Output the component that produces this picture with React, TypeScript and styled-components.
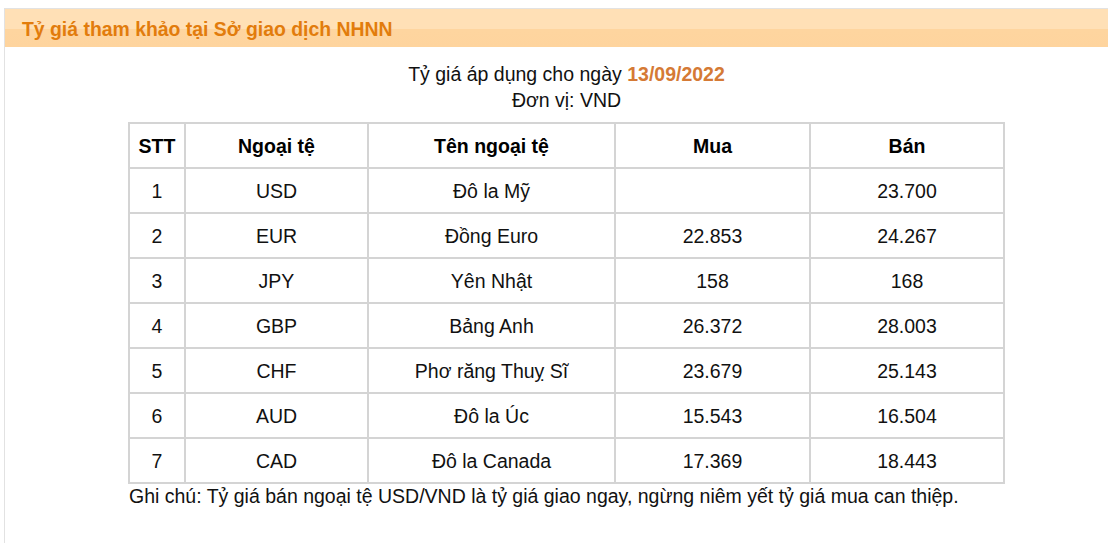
import styled, { createGlobalStyle } from "styled-components";

const GlobalStyle = createGlobalStyle`
  html, body {
    margin: 0;
    padding: 0;
    background: #fff;
    overflow: hidden;
  }
  body {
    padding: 8px 0 0 4px;
    font-family: "Liberation Sans", Arial, sans-serif;
    color: #111;
  }
`;

type Row = {
  stt: number;
  code: string;
  name: string;
  buy: string;
  sell: string;
};

const rows: Row[] = [
  { stt: 1, code: "USD", name: "Đô la Mỹ", buy: "", sell: "23.700" },
  { stt: 2, code: "EUR", name: "Đồng Euro", buy: "22.853", sell: "24.267" },
  { stt: 3, code: "JPY", name: "Yên Nhật", buy: "158", sell: "168" },
  { stt: 4, code: "GBP", name: "Bảng Anh", buy: "26.372", sell: "28.003" },
  { stt: 5, code: "CHF", name: "Phơ răng Thuỵ Sĩ", buy: "23.679", sell: "25.143" },
  { stt: 6, code: "AUD", name: "Đô la Úc", buy: "15.543", sell: "16.504" },
  { stt: 7, code: "CAD", name: "Đô la Canada", buy: "17.369", sell: "18.443" },
];

const colWidths = [56, 183, 247, 195, 194];

const Panel = styled.section`
  width: 1124px;
  min-height: 540px;
  border-top: 1px solid #e2e2e2;
  border-left: 1px solid #e2e2e2;
  box-sizing: border-box;
`;

const PanelHead = styled.div`
  height: 38px;
  display: flex;
  align-items: center;
  padding-left: 17px;
  background: linear-gradient(to bottom, #ffe0b6 0%, #ffe0b6 52%, #fed59f 53%, #fed49e 100%);
`;

const PanelTitle = styled.h2`
  margin: 0;
  font-size: 19.4px;
  font-weight: bold;
  color: #e27c0c;
  padding-top: 2px;
`;

const PanelBody = styled.div`
  display: flex;
  flex-direction: column;
  align-items: center;
  padding-top: 14px;
`;

const Caption = styled.div`
  font-size: 19.5px;
  line-height: 26px;
  text-align: center;
  color: #111;
`;

const DateText = styled.span`
  color: #d57a35;
  font-weight: bold;
`;

const TableWrap = styled.div`
  margin-top: 9px;
  display: flex;
  flex-direction: column;
`;

const Table = styled.table`
  border: 1px solid #d4d4d4;
  border-spacing: 0;
  border-collapse: separate;
  table-layout: fixed;
  width: 875px;
`;

const Th = styled.th`
  border: 1px solid #d4d4d4;
  height: 43px;
  padding: 0;
  line-height: 22px;
  font-size: 19.5px;
  font-weight: bold;
  text-align: center;
  color: #000;
`;

const Td = styled.td`
  border: 1px solid #d4d4d4;
  height: 43px;
  padding: 0;
  line-height: 22px;
  font-size: 19.5px;
  text-align: center;
  color: #111;
`;

const Note = styled.p`
  margin: 0;
  padding-left: 1px;
  font-size: 19.5px;
  line-height: 24px;
  color: #111;
`;

export default function App() {
  return (
    <>
      <GlobalStyle />
      <Panel>
        <PanelHead>
          <PanelTitle>Tỷ giá tham khảo tại Sở giao dịch NHNN</PanelTitle>
        </PanelHead>
        <PanelBody>
          <Caption>
            Tỷ giá áp dụng cho ngày <DateText>13/09/2022</DateText>
          </Caption>
          <Caption>Đơn vị: VND</Caption>
          <TableWrap>
            <Table>
              <colgroup>
                {colWidths.map((w, i) => (
                  <col key={i} style={{ width: w }} />
                ))}
              </colgroup>
              <thead>
                <tr>
                  <Th>STT</Th>
                  <Th>Ngoại tệ</Th>
                  <Th>Tên ngoại tệ</Th>
                  <Th>Mua</Th>
                  <Th>Bán</Th>
                </tr>
              </thead>
              <tbody>
                {rows.map((r) => (
                  <tr key={r.stt}>
                    <Td>{r.stt}</Td>
                    <Td>{r.code}</Td>
                    <Td>{r.name}</Td>
                    <Td>{r.buy}</Td>
                    <Td>{r.sell}</Td>
                  </tr>
                ))}
              </tbody>
            </Table>
            <Note>
              Ghi chú: Tỷ giá bán ngoại tệ USD/VND là tỷ giá giao ngay, ngừng niêm yết tỷ giá mua can thiệp.
            </Note>
          </TableWrap>
        </PanelBody>
      </Panel>
    </>
  );
}
